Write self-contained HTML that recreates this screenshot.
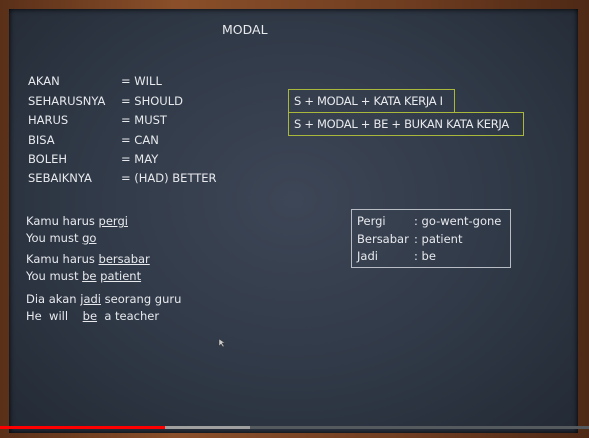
<!DOCTYPE html>
<html><head><style>
html,body{margin:0;padding:0;width:589px;height:438px;overflow:hidden;background:#000}
.frame{position:absolute;left:0;top:0;width:589px;height:438px;background:linear-gradient(90deg,#5a3019,#8a4f2a 30%,#6e3c20 70%,#4e2915);}
.board{position:absolute;left:9px;top:9px;width:569px;height:424px;background:radial-gradient(ellipse at 50% 45%,#3d4656 0%,#313a48 50%,#232a35 100%);box-shadow:inset 0 0 6px #000}
.t{position:absolute;font-family:"DejaVu Sans","Liberation Sans",sans-serif;color:#e8eaee;font-size:11.5px;white-space:nowrap;line-height:14px}
.box{position:absolute;border:1.5px solid #a9b83a}
.u{text-decoration:underline}
</style></head><body>
<div class="frame"></div>
<div class="board"></div>
<div class="t" style="left:222px;top:23px;font-size:12.5px">MODAL</div>
<div class="t" style="left:28px;top:74px">AKAN</div><div class="t" style="left:121px;top:74px">= WILL</div>
<div class="t" style="left:28px;top:94px">SEHARUSNYA</div><div class="t" style="left:121px;top:94px">= SHOULD</div>
<div class="t" style="left:28px;top:113px">HARUS</div><div class="t" style="left:121px;top:113px">= MUST</div>
<div class="t" style="left:28px;top:133px">BISA</div><div class="t" style="left:121px;top:133px">= CAN</div>
<div class="t" style="left:28px;top:152px">BOLEH</div><div class="t" style="left:121px;top:152px">= MAY</div>
<div class="t" style="left:28px;top:171px">SEBAIKNYA</div><div class="t" style="left:121px;top:171px">= (HAD) BETTER</div>
<div class="box" style="left:288px;top:89px;width:165px;height:22px"></div>
<div class="box" style="left:288px;top:112px;width:234px;height:22px"></div>
<div class="t" style="left:294px;top:94px;letter-spacing:-0.3px">S + MODAL + KATA KERJA I</div>
<div class="t" style="left:294px;top:117px;letter-spacing:-0.3px">S + MODAL + BE + BUKAN KATA KERJA</div>
<div class="box" style="left:351px;top:209px;width:158px;height:57px;border-color:#b8bcc4;border-width:1px"></div>
<div class="t" style="left:357px;top:214px">Pergi</div><div class="t" style="left:414px;top:214px">: go-went-gone</div>
<div class="t" style="left:357px;top:232px">Bersabar</div><div class="t" style="left:414px;top:232px">: patient</div>
<div class="t" style="left:357px;top:249px">Jadi</div><div class="t" style="left:414px;top:249px">: be</div>
<div class="t" style="left:26px;top:214px">Kamu harus <span class="u">pergi</span></div>
<div class="t" style="left:26px;top:231px">You must <span class="u">go</span></div>
<div class="t" style="left:26px;top:252px">Kamu harus <span class="u">bersabar</span></div>
<div class="t" style="left:26px;top:269px">You must <span class="u">be</span> <span class="u">patient</span></div>
<div class="t" style="left:26px;top:292px">Dia akan <span class="u">jadi</span> seorang guru</div>
<div class="t" style="left:26px;top:309px">He&nbsp;&nbsp;will&nbsp;&nbsp;&nbsp;&nbsp;<span class="u">be</span>&nbsp;&nbsp;a teacher</div>
<svg style="position:absolute;left:218px;top:338px" width="8" height="10"><path d="M1 1 L1 8 L3 6 L5 9 L6 8 L4 5 L7 5 Z" fill="#ccc" stroke="#333" stroke-width="0.5"/></svg>
<div style="position:absolute;left:0;top:426px;width:589px;height:3px;background:#555a5f"></div>
<div style="position:absolute;left:0;top:426px;width:250px;height:3px;background:#a0a0a0"></div>
<div style="position:absolute;left:0;top:426px;width:165px;height:3px;background:#f00"></div>
</body></html>
